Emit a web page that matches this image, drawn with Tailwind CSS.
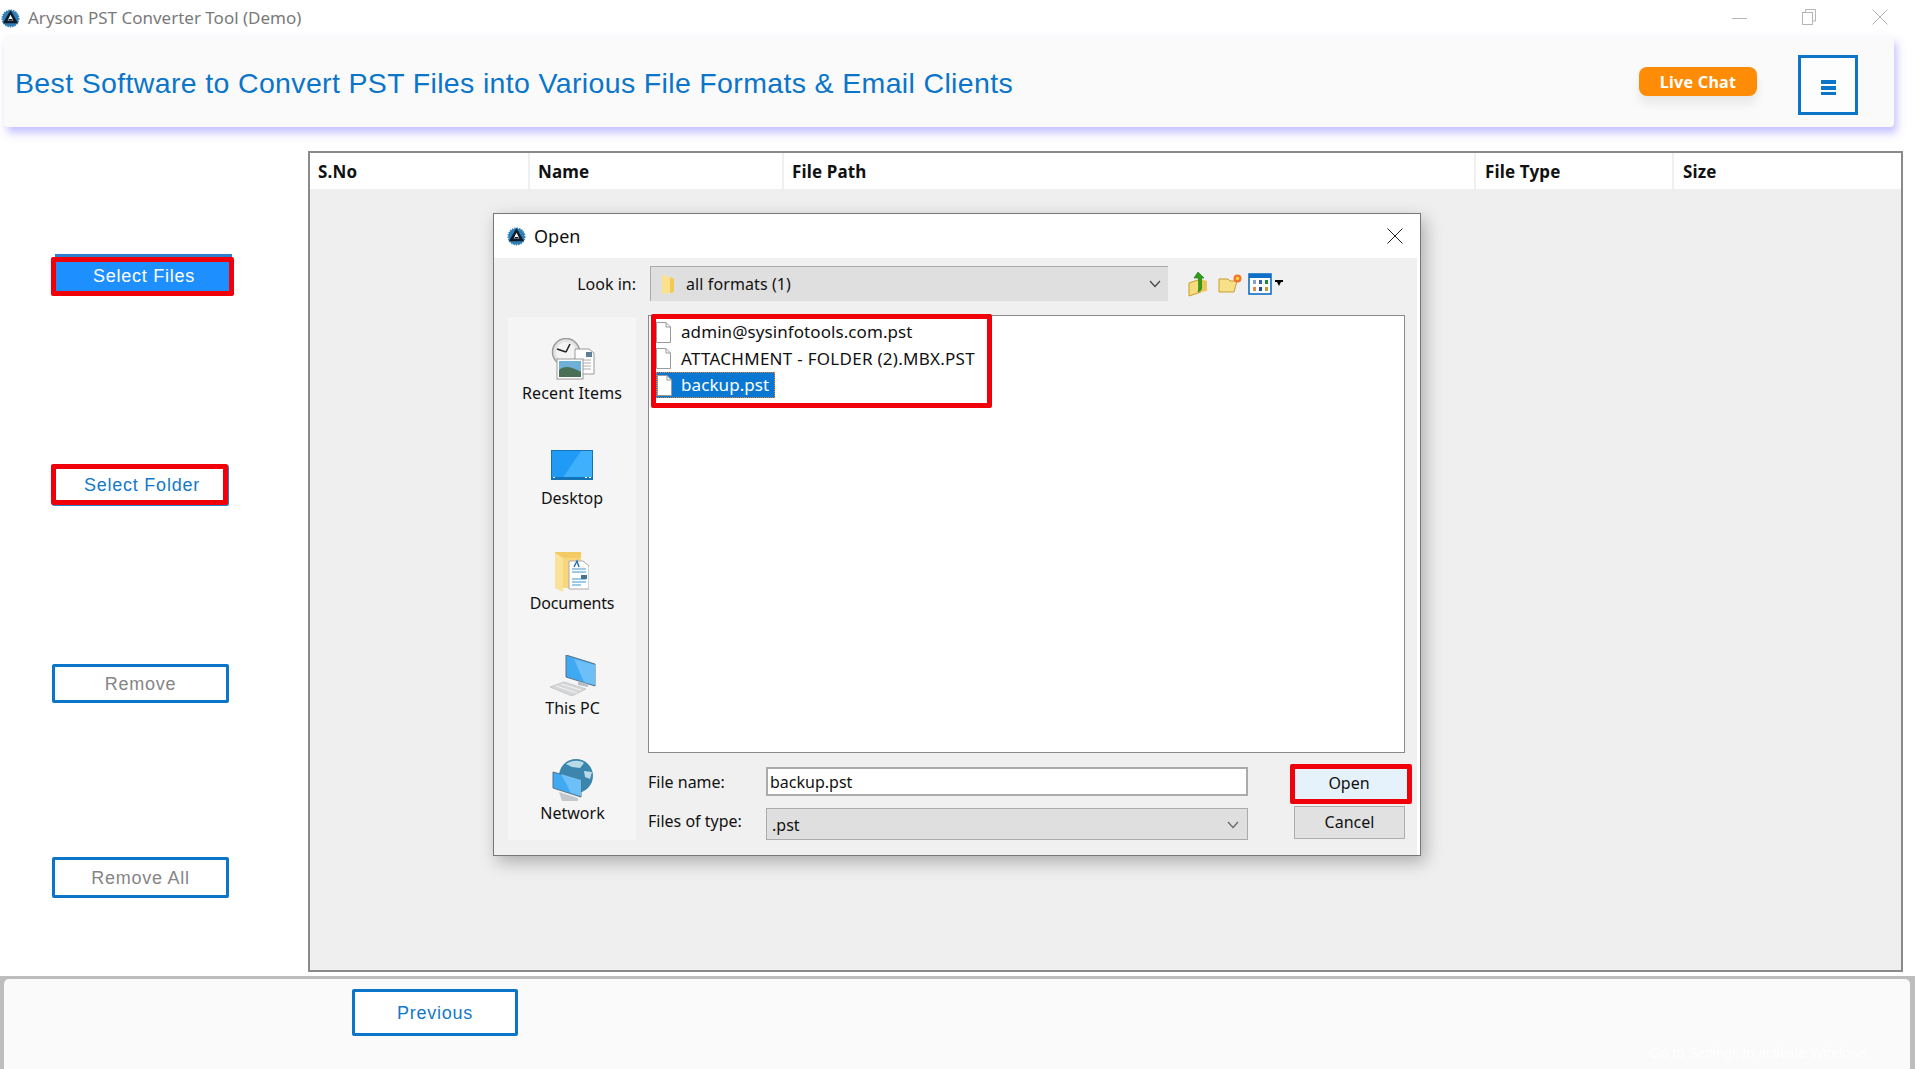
<!DOCTYPE html>
<html><head><meta charset="utf-8"><script src="https://cdn.jsdelivr.net/npm/@tailwindcss/browser@4"></script><title>Aryson PST Converter Tool (Demo)</title></head>
<body class="bg-white">
<div class="relative w-[1915px] h-[1069px] overflow-hidden bg-white flex flex-col font-['Liberation_Sans',sans-serif]">

<!-- title bar -->
<div class="h-[36px] flex items-center shrink-0">
  <svg class="ml-[1px] w-[19px] h-[21px]" viewBox="0 0 20 22"><circle cx="10" cy="11" r="8.5" fill="#2f7fb5" stroke="#2f7fb5" stroke-width="2" stroke-dasharray="1.5 1"/><path d="M10 2 18 16H2Z" fill="#0d1b2a"/><path d="M10 7 13 13H7Z" fill="#fff"/><path d="M8 11.5H12V13H8Z" fill="#0d1b2a"/></svg>
  <span class="ml-[8px] text-[17px] text-[#7a7a7a] font-['Noto_Sans',sans-serif]">Aryson PST Converter Tool (Demo)</span>
  <div class="ml-auto flex items-center">
    <svg class="w-[16px] h-[16px] mr-[53px]" viewBox="0 0 16 16"><path d="M0 8.5H15" stroke="#b5b5b5" stroke-width="1"/></svg>
    <svg class="w-[16px] h-[16px] mr-[55px] mt-[-2px]" viewBox="0 0 16 16" fill="none" stroke="#b5b5b5"><path d="M4.5 3V.5H14.5V12H12"/><rect x="1.5" y="3.5" width="10" height="12"/></svg>
    <svg class="w-[16px] h-[16px] mr-[27px] mt-[-2px]" viewBox="0 0 16 16" fill="none" stroke="#b5b5b5"><path d="M.5.5 15.5 15.5M15.5.5.5 15.5"/></svg>
  </div>
</div>

<!-- header -->
<div class="ml-[4px] w-[1890px] h-[91px] shrink-0 flex items-center bg-[#fafafa] rounded-[4px] shadow-[3px_6px_9px_rgba(120,110,255,0.42)] relative z-10">
  <h1 class="ml-[11px] pt-[4px] text-[28.5px] leading-none tracking-[0.35px] text-[#0a75c9] font-normal">Best Software to Convert PST Files into Various File Formats &amp; Email Clients</h1>
  <button class="ml-auto w-[118px] h-[29px] rounded-[8px] bg-[#ff8c06] text-white text-[16px] tracking-[0.3px] font-bold font-['Noto_Sans',sans-serif] shadow-[0_8px_10px_rgba(0,0,0,0.07)]">Live Chat</button>
  <button class="ml-[41px] mr-[36px] mt-[7px] w-[60px] h-[60px] border-[3px] border-[#0a75c9] bg-[#fdfdfd] flex flex-col items-center justify-center gap-[2px] pt-[5px]">
    <span class="block w-[15px] h-[4px] bg-[#0a75c9]"></span><span class="block w-[15px] h-[4px] bg-[#0a75c9]"></span><span class="block w-[15px] h-[3px] bg-[#0a75c9]"></span>
  </button>
</div>

<!-- main -->
<div class="flex h-[849px] shrink-0">
  <div class="w-[308px] shrink-0 flex flex-col items-start pl-[51px] text-[18px] tracking-[0.75px]">
    <button class="relative mt-[130px] w-[183px] h-[39px] border-[5px] border-[#f00008] rounded-[2px] bg-[#1e8fff] text-white pl-[3px]">Select Files<span class="absolute left-[-1px] top-[-8px] w-[177px] h-[3px] bg-[#2f7fd0]"></span></button>
    <button class="mt-[168px] w-[177px] h-[41px] border-[5px] border-[#f00008] rounded-[2px] bg-white text-[#1478c8] shadow-[1px_1px_0_#2f7fd0] pl-[5px] pt-[1px]">Select Folder</button>
    <button class="mt-[159px] ml-[1px] w-[177px] h-[39px] border-[3px] border-[#0a75c9] rounded-[2px] bg-white text-[#858585] pt-[1px]">Remove</button>
    <button class="mt-[154px] ml-[1px] w-[177px] h-[41px] border-[3px] border-[#0a75c9] rounded-[2px] bg-white text-[#858585] pt-[1px]">Remove All</button>
  </div>
  <div class="mt-[24px] w-[1595px] h-[821px] border-2 border-[#8a8a8a] bg-[#efefef] flex flex-col">
    <div class="grid grid-cols-[220px_254px_692px_198px_227px] h-[36px] text-[17px] tracking-[0.15px] font-bold font-['Noto_Sans',sans-serif] text-[#111]">
      <div class="bg-white border-r-2 border-[#efefef] pl-[8px] pt-[1px] flex items-center">S.No</div>
      <div class="bg-white border-r-2 border-[#efefef] pl-[8px] pt-[1px] flex items-center">Name</div>
      <div class="bg-white border-r-2 border-[#efefef] pl-[8px] pt-[1px] flex items-center">File Path</div>
      <div class="bg-white border-r-2 border-[#efefef] pl-[9px] pt-[1px] flex items-center">File Type</div>
      <div class="bg-white pl-[9px] pt-[1px] flex items-center">Size</div>
    </div>
  </div>
</div>

<!-- footer -->
<div class="flex-1 pt-[3px] pl-[4px] pr-[5px] bg-[#bdbdbd] min-h-0">
  <div class="relative h-full rounded-t-[5px] bg-[#fafafa]">
    <button class="ml-[348px] mt-[10px] w-[166px] h-[47px] border-[3px] border-[#0a75c9] rounded-[2px] bg-white text-[#1478c8] text-[18px] tracking-[0.75px] pt-[1px]">Previous</button>
    <span class="absolute left-[1646px] top-[67px] text-[14px] leading-none text-white">Go to Settings to activate Windows.</span>
  </div>
</div>

<!-- Open dialog -->
<div class="absolute left-[493px] top-[213px] w-[928px] h-[643px] z-20 border border-[#777] bg-white shadow-[4px_6px_16px_rgba(0,0,0,0.28)] flex flex-col font-['Noto_Sans',sans-serif] text-[#111] text-[16px]">
  <div class="h-[44px] shrink-0 flex items-center pl-[13px]">
    <svg class="w-[19px] h-[21px]" viewBox="0 0 20 22"><circle cx="10" cy="11" r="8.5" fill="#2f7fb5" stroke="#2f7fb5" stroke-width="2" stroke-dasharray="1.5 1"/><path d="M10 2 18 16H2Z" fill="#0d1b2a"/><path d="M10 7 13 13H7Z" fill="#fff"/><path d="M8 11.5H12V13H8Z" fill="#0d1b2a"/></svg>
    <span class="ml-[8px] text-[18px] leading-none">Open</span>
    <svg class="ml-auto mr-[17px] w-[16px] h-[16px]" viewBox="0 0 16 16" fill="none" stroke="#222"><path d="M.5.5 15.5 15.5M15.5.5.5 15.5"/></svg>
  </div>
  <div class="flex-1 bg-[#f0f0f0] mr-[3px] pt-[8px] flex flex-col min-h-0">
    <!-- look in -->
    <div class="flex items-center h-[35px] shrink-0">
      <span class="w-[142px] text-right">Look in:</span>
      <div class="ml-[14px] w-[518px] h-[35px] bg-[#dfdfdf] border-t border-l border-[#ababab] flex items-center pl-[9px]">
        <svg class="w-[15px] h-[21px]" viewBox="0 0 15 21"><path d="M2 1 10 3V19L2 20Z" fill="#fbe08d"/><path d="M10 3 14 5V18L10 19Z" fill="#f3c855"/></svg>
        <span class="ml-[11px] tracking-[0.1px]">all formats (1)</span>
        <svg class="ml-auto mr-[7px] w-[12px] h-[8px]" viewBox="0 0 12 8" fill="none" stroke="#444" stroke-width="1.2"><path d="M1 1 6 6.5 11 1"/></svg>
      </div>
      <svg class="ml-[20px] w-[21px] h-[26px]" viewBox="0 0 21 26"><path d="M1 12 13 8V21L1 25Z" fill="#f7dc7e" stroke="#c79f2c"/><path d="M13 8 19 10V20L13 21Z" fill="#e9c65a"/><path d="M10 1 16 7H13.5V17C13.5 19 12 20 10 21 11 18 10.5 14 10.5 7H6Z" fill="#2f9e17" stroke="#15700a" stroke-width=".6"/></svg>
      <svg class="ml-[9px] w-[25px] h-[21px]" viewBox="0 0 25 21"><path d="M1 6H10L12 8H19L16 19H1Z" fill="#f8e08a" stroke="#c79f2c"/><circle cx="19.5" cy="5.5" r="4" fill="#f2752a"/><circle cx="19.5" cy="5.5" r="1.8" fill="#fbd23c"/></svg>
      <svg class="ml-[5px] w-[24px] h-[22px]" viewBox="0 0 24 22"><rect x="1" y="1" width="22" height="20" fill="#fff" stroke="#0f6fc6" stroke-width="1.6"/><rect x="1" y="1" width="22" height="4" fill="#0f6fc6"/><rect x="5" y="7" width="3" height="4" fill="#8a9ec9"/><rect x="11" y="7" width="3" height="4" fill="#3f5fa8"/><rect x="17" y="7" width="3" height="4" fill="#1d8a3a"/><rect x="5" y="14" width="3" height="4" fill="#e48a4c"/><rect x="11" y="14" width="3" height="4" fill="#1f4f96"/><rect x="17" y="14" width="3" height="4" fill="#c69a35"/></svg>
      <svg class="ml-[3px] w-[8px] h-[7px]" viewBox="0 0 8 7"><path d="M0 0H8V2H6L4 6 2 2H0Z" fill="#000"/></svg>
    </div>
    <!-- panels -->
    <div class="flex mt-[14px] flex-1 min-h-0">
      <div class="ml-[14px] mt-[2px] w-[128px] h-[523px] shrink-0 bg-[#f5f5f5] flex flex-col items-center">
        <svg class="mt-[21px] ml-[1px] w-[44px] h-[42px]" viewBox="0 0 44 42"><circle cx="15" cy="14" r="13.5" fill="#e3e3e3" stroke="#9b9b9b" stroke-width="1.5"/><circle cx="15" cy="14" r="10" fill="#f4f4f4"/><path d="M15 14 19 6M15 14 6 11" stroke="#222" stroke-width="1.6"/><path d="M24 11H38L43 15V36H24Z" fill="#fff" stroke="#999"/><path d="M27 22H40M27 25H40M27 28H40M27 31H40" stroke="#aaa"/><rect x="35" y="14" width="6" height="5" fill="#5e7f95"/><rect x="6" y="21" width="26" height="20" fill="#fff" stroke="#9a9a9a"/><rect x="8" y="23" width="22" height="16" fill="#6fb1d6"/><path d="M8 32C14 27 20 29 30 34V39H8Z" fill="#4a6f57"/></svg>
        <span class="mt-[1px] leading-[24px] tracking-[0.15px]">Recent Items</span>
        <svg class="mt-[45px] w-[42px] h-[30px]" viewBox="0 0 42 30"><rect x=".5" y=".5" width="41" height="29" fill="#1f9bf5" stroke="#1573b8"/><path d="M11 29 30 1H41V29Z" fill="#3fb0fb"/><rect x="1" y="27" width="40" height="2" fill="#1573b8"/><path d="M2 27.5H4M34 27.5H36M38 27.5H40" stroke="#fff"/></svg>
        <span class="mt-[6px] leading-[24px]">Desktop</span>
        <svg class="mt-[42px] w-[34px] h-[40px]" viewBox="0 0 34 40"><path d="M0 1 8 6V40L0 36Z" fill="#fbe29a"/><path d="M0 0H26V6H8L0 1Z" fill="#f3ca63"/><path d="M8 6H26V36H8Z" fill="#f7d77a"/><path d="M14 9H28L34 14V37H14Z" fill="#fff" stroke="#aaa"/><path d="M17 17H31M17 20H31M17 27H31M17 30H31M17 33H26" stroke="#3a94cf"/><rect x="26" y="23" width="6" height="4" fill="#45708f"/><path d="M19 15 22 9 24 15" fill="none" stroke="#1f6fb5" stroke-width="1.4"/></svg>
        <span class="mt-[-1px] leading-[24px] tracking-[-0.2px]">Documents</span>
        <svg class="mt-[40px] ml-[1px] w-[46px] h-[41px]" viewBox="0 0 46 41"><path d="M16 0 45 9V31L16 22Z" fill="#3fa9f2" stroke="#5d7386"/><path d="M24 4 45 10V30L34 27Z" fill="#6cc0f7"/><path d="M28 26 38 29V32L28 30Z" fill="#b5bfc8"/><path d="M0 32 14 27 36 34 22 41Z" fill="#d5d7d9" stroke="#b3b6ba" stroke-width=".6"/><path d="M6 31 27 38M11 29 31 35" stroke="#f3f3f3"/></svg>
        <span class="mt-0 ml-[1px] leading-[24px]">This PC</span>
        <svg class="mt-[39px] ml-[1px] w-[42px] h-[42px]" viewBox="0 0 42 42"><circle cx="24" cy="17" r="17" fill="#3c85ad"/><path d="M14 5C20 1 28 1 32 4L28 9 20 8ZM32 12 40 13 38 20 33 18Z" fill="#b9dbe8"/><path d="M1 13 29 21V38L1 29Z" fill="#3fa9f2" stroke="#5d7386"/><path d="M9 15 29 21V37L19 34Z" fill="#6cc0f7"/><path d="M7 33 26 39V42H10Z" fill="#c3c8cc"/></svg>
        <span class="mt-0 ml-[1px] leading-[24px]">Network</span>
      </div>
      <div class="ml-[12px] w-[757px] flex flex-col relative">
        <div class="relative w-[757px] h-[438px] shrink-0 bg-white border border-[#8a8a8a] pt-[3px] pl-[7px] text-[17px] tracking-[0.08px]">
          <div class="h-[26px] flex items-center"><svg class="w-[15px] h-[21px]" viewBox="0 0 15 21" fill="#fff" stroke="#9a9a9a"><path d="M.5.5H10L14.5 5V20.5H.5Z"/><path d="M10 .5V5H14.5" fill="none"/></svg><span class="ml-[10px]">admin@sysinfotools.com.pst</span></div>
          <div class="h-[27px] flex items-center"><svg class="w-[15px] h-[21px]" viewBox="0 0 15 21" fill="#fff" stroke="#9a9a9a"><path d="M.5.5H10L14.5 5V20.5H.5Z"/><path d="M10 .5V5H14.5" fill="none"/></svg><span class="ml-[10px] tracking-[0.27px]">ATTACHMENT - FOLDER (2).MBX.PST</span></div>
          <div class="h-[26px] w-[119px] flex items-center bg-[#0a78d2] border border-dotted border-[#e0842e] text-white"><svg class="w-[15px] h-[21px] shrink-0" viewBox="0 0 15 21" fill="#fff" stroke="#9a9a9a"><path d="M.5.5H10L14.5 5V20.5H.5Z"/><path d="M10 .5V5H14.5" fill="none"/></svg><span class="ml-[9px]">backup.pst</span></div>
          <div class="absolute left-[2px] top-[-2px] w-[341px] h-[94px] border-[5px] border-[#f00008] rounded-[2px]"></div>
        </div>
        <div class="mt-[11px] h-[40px] flex items-start shrink-0">
          <span class="w-[118px] shrink-0 mt-[6px] leading-[24px]">File name:</span>
          <div class="mt-[3px] w-[482px] shrink-0 h-[29px] bg-white border-2 border-[#ababab] flex items-center pl-[2px]">backup.pst</div>
          <button class="ml-[42px] w-[122px] shrink-0 h-[40px] border-[5px] border-[#f00008] rounded-[2px] bg-[#e5f1fb] pb-[3px] pr-[4px]">Open</button>
        </div>
        <div class="mt-[2px] h-[33px] flex items-start shrink-0">
          <span class="w-[118px] shrink-0 mt-[3px] leading-[24px]">Files of type:</span>
          <div class="mt-[2px] w-[482px] shrink-0 h-[32px] bg-[#dfdfdf] border border-[#ababab] flex items-center pl-[5px] pt-[2px]">.pst<svg class="ml-auto mr-[8px] w-[12px] h-[8px]" viewBox="0 0 12 8" fill="none" stroke="#666" stroke-width="1.2"><path d="M1 1 6 6.5 11 1"/></svg></div>
          <button class="ml-[46px] w-[111px] shrink-0 h-[33px] border border-[#adadad] bg-[#e1e1e1] pb-[1px]">Cancel</button>
        </div>
      </div>
    </div>
  </div>
</div>
</div>
</body></html>
